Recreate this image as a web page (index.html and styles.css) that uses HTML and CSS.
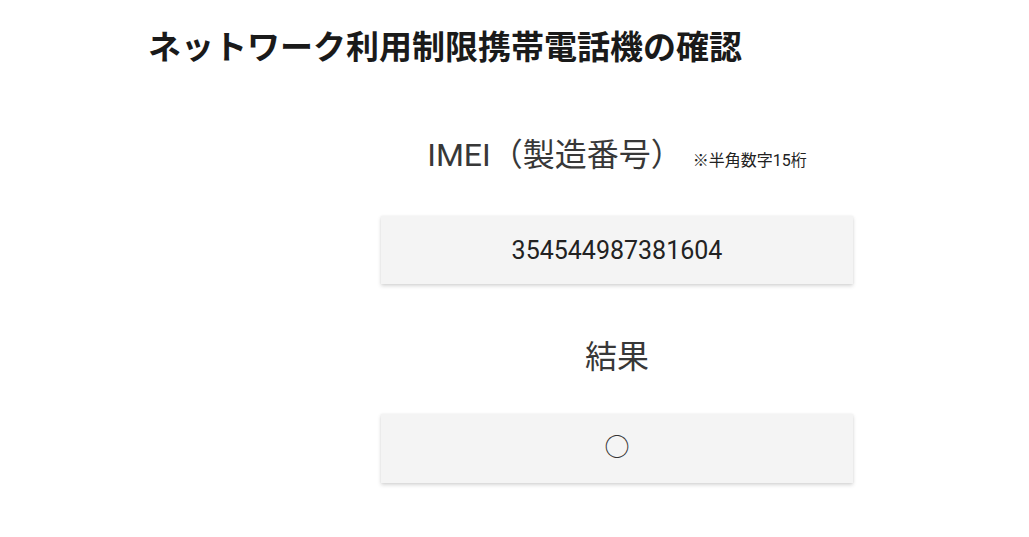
FILE: index.html
```html
<!DOCTYPE html>
<html lang="ja">
<head>
<meta charset="utf-8">
<title>ネットワーク利用制限携帯電話機の確認</title>
<link rel="stylesheet" href="styles.css">
</head>
<body>
<div class="page">
  <h1 class="title">ネットワーク利用制限携帯電話機の確認</h1>
  <div class="form">
    <div class="label label-imei">IMEI（製造番号）<span class="note">※半角数字15桁</span></div>
    <div class="field field-imei">354544987381604</div>
    <div class="label label-result">結果</div>
    <div class="field field-result">○</div>
  </div>
</div>
</body>
</html>
```
FILE: styles.css
```css
* { box-sizing: border-box; }
html, body {
  margin: 0;
  padding: 0;
  background: #ffffff;
}
body {
  font-family: Roboto, "Noto Sans CJK JP", sans-serif;
  color: #222;
}
.page {
  padding: 25px 0 50px 148px;
}
.title {
  margin: 0;
  font-family: "Noto Sans CJK JP", sans-serif;
  font-size: 33px;
  line-height: 40px;
  font-weight: 700;
  color: #1a1a1a;
  white-space: nowrap;
}
.form {
  margin-left: 233px;
  width: 472px;
  display: flex;
  flex-direction: column;
  align-items: stretch;
}
.label {
  text-align: center;
  font-size: 32px;
  line-height: 44px;
  color: #383838;
  white-space: nowrap;
}
.label-imei {
  margin-top: 68px;
}
.note {
  font-size: 16px;
  color: #222;
  margin-left: 10px;
}
.field {
  background: #f4f4f4;
  box-shadow: 0 2px 4px rgba(0, 0, 0, 0.16), 0 0 2px rgba(0, 0, 0, 0.06);
  height: 68px;
  display: flex;
  align-items: center;
  justify-content: center;
  color: #222;
}
.field-imei {
  margin-top: 33px;
  font-size: 25px;
}
.label-result {
  margin-top: 51px;
}
.field-result {
  margin-top: 35px;
  height: 69px;
  padding-bottom: 7px;
  font-family: "Noto Sans CJK JP", sans-serif;
  font-size: 25px;
  color: #333;
}
```
